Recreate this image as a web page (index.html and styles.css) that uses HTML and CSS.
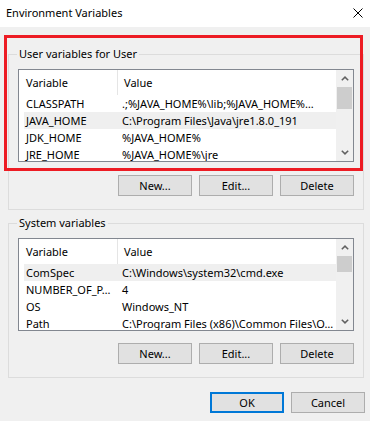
FILE: index.html
```html
<!DOCTYPE html>
<html lang="en">
<head>
    <meta charset="UTF-8">
    <meta name="viewport" content="width=device-width, initial-scale=1.0">
    <title>Environment Variables</title>
    <link rel="stylesheet" href="styles.css">
</head>
<body>
    <div class="window">
        <div class="titlebar">
            <span class="title">Environment Variables</span>
            <svg class="close" width="10" height="10" viewBox="0 0 10 10">
                <path d="M0.5 0.5 L9.5 9.5 M9.5 0.5 L0.5 9.5" stroke="#000" stroke-width="1" fill="none"/>
            </svg>
        </div>

        <div class="group">
            <div class="group-title">User variables for User</div>
            <div class="list">
                <div class="list-main">
                    <div class="list-head">
                        <span class="col-name">Variable</span>
                        <span class="col-value">Value</span>
                    </div>
                    <div class="row"><span class="col-name">CLASSPATH</span><span class="col-value">.;%JAVA_HOME%\lib;%JAVA_HOME%…</span></div>
                    <div class="row selected"><span class="col-name">JAVA_HOME</span><span class="col-value">C:\Program Files\Java\jre1.8.0_191</span></div>
                    <div class="row"><span class="col-name">JDK_HOME</span><span class="col-value">%JAVA_HOME%</span></div>
                    <div class="row"><span class="col-name">JRE_HOME</span><span class="col-value">%JAVA_HOME%\jre</span></div>
                </div>
                <div class="scrollbar">
                    <span class="arrow"><svg width="8" height="5" viewBox="0 0 8 5"><polyline points="0.8,4.3 4,1.1 7.2,4.3" fill="none" stroke="#606060" stroke-width="1.5"/></svg></span>
                    <span class="thumb thumb-user"></span>
                    <span class="track"></span>
                    <span class="arrow"><svg width="8" height="5" viewBox="0 0 8 5"><polyline points="0.8,0.7 4,3.9 7.2,0.7" fill="none" stroke="#606060" stroke-width="1.5"/></svg></span>
                </div>
            </div>
            <div class="group-buttons">
                <button>New...</button>
                <button>Edit...</button>
                <button>Delete</button>
            </div>
        </div>

        <div class="group">
            <div class="group-title">System variables</div>
            <div class="list">
                <div class="list-main">
                    <div class="list-head">
                        <span class="col-name">Variable</span>
                        <span class="col-value">Value</span>
                    </div>
                    <div class="row selected"><span class="col-name">ComSpec</span><span class="col-value">C:\Windows\system32\cmd.exe</span></div>
                    <div class="row"><span class="col-name">NUMBER_OF_P…</span><span class="col-value">4</span></div>
                    <div class="row"><span class="col-name">OS</span><span class="col-value">Windows_NT</span></div>
                    <div class="row"><span class="col-name">Path</span><span class="col-value">C:\Program Files (x86)\Common Files\O…</span></div>
                </div>
                <div class="scrollbar">
                    <span class="arrow"><svg width="8" height="5" viewBox="0 0 8 5"><polyline points="0.8,4.3 4,1.1 7.2,4.3" fill="none" stroke="#606060" stroke-width="1.5"/></svg></span>
                    <span class="thumb thumb-system"></span>
                    <span class="track"></span>
                    <span class="arrow"><svg width="8" height="5" viewBox="0 0 8 5"><polyline points="0.8,0.7 4,3.9 7.2,0.7" fill="none" stroke="#606060" stroke-width="1.5"/></svg></span>
                </div>
            </div>
            <div class="group-buttons">
                <button>New...</button>
                <button>Edit...</button>
                <button>Delete</button>
            </div>
        </div>

        <div class="dialog-buttons">
            <button class="default-btn">OK</button>
            <button>Cancel</button>
        </div>

        <!-- annotation drawn over the user variables section -->
        <div class="highlight"></div>
    </div>
</body>
</html>
```

FILE: styles.css
```css
body {
    margin: 0;
    padding: 0;
    font-family: 'Noto Sans', 'Open Sans', sans-serif;
    font-size: 11px;
    color: #000;
    background: #f0f0f0;
}

.window {
    position: relative;
    width: 370px;
    height: 421px;
    background: #f0f0f0;
    overflow: hidden;
}

/* Title bar */
.titlebar {
    display: flex;
    justify-content: space-between;
    align-items: center;
    height: 27px;
    padding: 0 7px 0 6px;
    background: #fff;
    box-sizing: border-box;
}

.title {
    line-height: 16px;
    padding-bottom: 1px;
}

.close {
    display: block;
    margin-bottom: 1px;
}

/* Group boxes */
.group {
    margin: 27px 6px 0 8px;
    padding: 0 9px 13px 9px;
    border: 1px solid #dcdcdc;
}

.group + .group {
    margin-top: 13px;
}

.group-title {
    display: table;
    margin: -9px 0 0 -1px;
    padding: 0 2px;
    line-height: 16px;
    background: #f0f0f0;
}

/* List view */
.list {
    display: flex;
    height: 93px;
    margin-top: 7px;
    border: 1px solid #828790;
    background: #fff;
    box-sizing: border-box;
    overflow: hidden;
}

.list-main {
    flex: 1;
    overflow: hidden;
}

.list-head,
.row {
    display: grid;
    grid-template-columns: 94px 1fr;
    margin-left: 5px;
    white-space: nowrap;
}

.list-head {
    height: 25px;
    align-items: center;
}

.list-head .col-name {
    height: 100%;
    display: flex;
    align-items: center;
    border-right: 1px solid #e5e5e5;
    padding-left: 2px;
    box-sizing: border-box;
}

.list-head .col-value {
    padding-left: 6px;
}

.row {
    height: 17px;
    line-height: 17px;
}

.row .col-name {
    padding-left: 2px;
    overflow: hidden;
}

.row .col-value {
    padding-left: 4px;
    overflow: hidden;
}

.row.selected {
    background: #efefef;
}

/* Scroll bar */
.scrollbar {
    display: flex;
    flex-direction: column;
    width: 17px;
    background: #f0f0f0;
}

.scrollbar .arrow {
    display: flex;
    align-items: center;
    justify-content: center;
    height: 17px;
    flex: none;
}

.scrollbar .thumb {
    flex: none;
    margin: 0 1px;
    background: #cdcdcd;
}

.thumb-user {
    height: 22px;
}

.thumb-system {
    height: 16px;
}

.scrollbar .track {
    flex: 1;
}

/* Buttons */
button {
    width: 74px;
    height: 21px;
    padding: 0;
    font-family: inherit;
    font-size: 11px;
    color: #000;
    background: #e1e1e1;
    border: 1px solid #adadad;
    box-sizing: border-box;
}

.group-buttons,
.dialog-buttons {
    display: flex;
    justify-content: flex-end;
    gap: 7px;
}

.group-buttons {
    margin-top: 13px;
}

.group + .group .group-buttons {
    margin-top: 12px;
}

.dialog-buttons {
    margin: 14px 5px 0 0;
}

.default-btn {
    border: 2px solid #0078d7;
}

/* Red annotation box */
.highlight {
    position: absolute;
    left: 4px;
    top: 35px;
    width: 359px;
    height: 136px;
    border: 3px solid #ed1c24;
    box-sizing: border-box;
    pointer-events: none;
}
```
